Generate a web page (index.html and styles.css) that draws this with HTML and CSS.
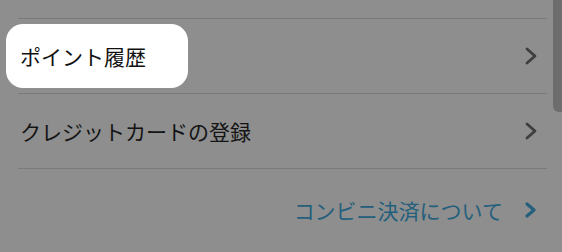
FILE: index.html
```html
<!DOCTYPE html>
<html lang="ja">
<head>
    <meta charset="UTF-8">
    <meta name="viewport" content="width=device-width, initial-scale=1.0">
    <title>メニュー</title>
    <link rel="stylesheet" href="styles.css">
</head>
<body>
    <div class="screen">
        <ul class="menu">
            <li class="menu-item">
                <span class="spot">ポイント履歴</span>
                <svg class="chevron" width="12" height="18" viewBox="0 0 12 18"><polyline points="2,2 10,9 2,16"/></svg>
            </li>
            <li class="menu-item">
                <span class="label">クレジットカードの登録</span>
                <svg class="chevron" width="12" height="18" viewBox="0 0 12 18"><polyline points="2,2 10,9 2,16"/></svg>
            </li>
        </ul>
        <div class="link-row">
            <a class="link" href="#">コンビニ決済について</a>
            <svg class="chevron blue" width="11" height="16" viewBox="0 0 11 16"><polyline points="2,2 9,8 2,14"/></svg>
        </div>
        <div class="scrollbar"></div>
    </div>
</body>
</html>
```

FILE: styles.css
```css
body {
    margin: 0;
    padding: 0;
    background-color: #8e8e8e;
    font-family: "Noto Sans CJK JP", "Noto Sans", sans-serif;
}
.screen {
    position: relative;
    width: 562px;
    height: 252px;
    overflow: hidden;
    padding-top: 18px;
    box-sizing: border-box;
}
.menu {
    list-style: none;
    margin: 0 15px 0 18px;
    padding: 0;
    border-top: 1px solid #7a7a7a;
}
.menu-item {
    height: 74px;
    border-bottom: 1px solid #7a7a7a;
    display: flex;
    align-items: center;
    justify-content: space-between;
    padding: 0 10px 0 2px;
}
.label {
    font-size: 21px;
    color: #141414;
}
.spot {
    display: flex;
    align-items: center;
    height: 64px;
    margin-left: -14px;
    padding: 0 42px 0 14px;
    background: #fff;
    border-radius: 17px;
    font-size: 21px;
    color: #111;
}
.chevron polyline {
    fill: none;
    stroke: #3e3e3e;
    stroke-width: 2.8;
    stroke-linecap: round;
    stroke-linejoin: round;
}
.chevron.blue polyline {
    stroke: #245f7c;
    stroke-width: 3.2;
}
.link-row {
    display: flex;
    justify-content: flex-end;
    align-items: center;
    gap: 22px;
    height: 82px;
    padding-right: 26px;
}
.link {
    font-size: 21px;
    color: #245f7c;
    text-decoration: none;
}
.scrollbar {
    position: absolute;
    top: 0;
    right: 0;
    width: 9px;
    height: 112px;
    background: #6d6d6d;
    border-radius: 0 0 0 6px;
}
```
